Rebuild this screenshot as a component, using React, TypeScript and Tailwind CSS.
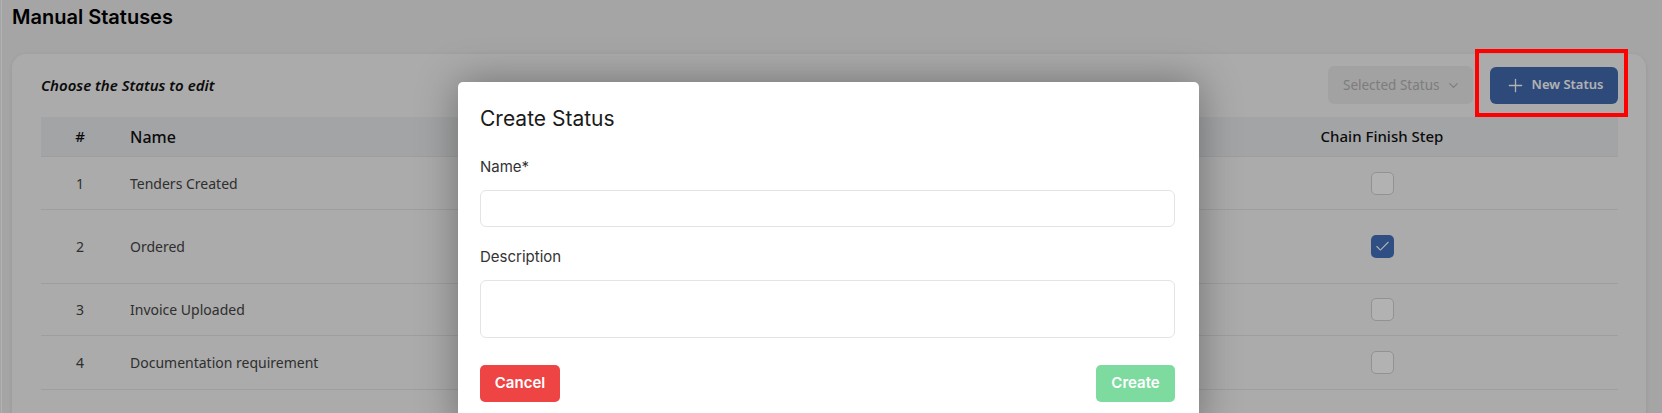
import React from "react";
import { Plus, ChevronDown, Check } from "lucide-react";

const statuses = [
    { id: 1, name: "Tenders Created", finish: false, h: "h-[53px]" },
    { id: 2, name: "Ordered", finish: true, h: "h-[74px]" },
    { id: 3, name: "Invoice Uploaded", finish: false, h: "h-[52px]" },
    { id: 4, name: "Documentation requirement", finish: false, h: "h-[54px]" },
];

const Checkbox = ({ checked }: { checked: boolean }) =>
    checked ? (
        <span className="w-[23px] h-[23px] rounded-[5px] bg-[#4370be] flex items-center justify-center">
            <Check size={17} strokeWidth={1.5} className="text-white" />
        </span>
    ) : (
        <span className="w-[23px] h-[23px] rounded-[5px] bg-white border border-[#cfd2d6]" />
    );

const StatusTable = () => {
    return (
        <div className="font-['Noto_Sans',sans-serif]">
            <div className="flex items-center h-[40px] bg-[#eaebed] border-b border-[#e2e3e5] text-[15px] font-medium text-[#111]">
                <div className="w-[78px] text-center">#</div>
                <div className="flex-1 pl-[11px] text-[16px]">Name</div>
                <div className="w-[472px] text-center">Chain Finish Step</div>
            </div>
            {statuses.map((s) => (
                <div
                    key={s.id}
                    className={`flex items-center ${s.h} border-b border-[#e2e3e5] text-[14px] text-[#444]`}
                >
                    <div className="w-[78px] text-center">{s.id}</div>
                    <div className="flex-1 pl-[11px]">{s.name}</div>
                    <div className="w-[472px] flex justify-center">
                        <Checkbox checked={s.finish} />
                    </div>
                </div>
            ))}
        </div>
    );
};

const CreateStatusModal = () => {
    return (
        <div className="absolute left-[458px] top-[82px] w-[741px] bg-white rounded-[5px] shadow-[0_0_40px_rgba(0,0,0,0.35)] pl-[22px] pr-[24px] pt-[23px] pb-[30px] font-['Inter',sans-serif]">
            <h2 className="text-[21px] leading-7 text-[#1a1a1a]">Create Status</h2>
            <label className="block mt-[22px] text-[15px] leading-6 text-[#333]">Name*</label>
            <input className="mt-[11px] w-full h-[37px] rounded-md border border-[#e3e4e8] outline-none" />
            <label className="block mt-[18px] text-[15px] leading-6 text-[#333]">Description</label>
            <textarea className="mt-[11px] w-full h-[58px] rounded-md border border-[#e3e4e8] outline-none resize-none block" />
            <div className="flex justify-between mt-[27px]">
                <button className="w-[80px] h-[37px] rounded-[5px] bg-[#ef4444] text-white text-[15px] font-semibold">
                    Cancel
                </button>
                <button className="w-[79px] h-[37px] rounded-[5px] bg-[#7ddb9f] text-white text-[15px] font-semibold">
                    Create
                </button>
            </div>
        </div>
    );
};

export default function App() {
    return (
        <div className="relative w-full h-[413px] overflow-hidden bg-[#ececed]">
            <div className="h-full border-l border-white ml-px pl-[10px] pr-[16px]">
                <h1 className="pt-[3px] text-[20px] leading-7 font-semibold text-black font-['Inter',sans-serif]">
                    Manual Statuses
                </h1>
                <div className="mt-[23px] bg-[#f5f5f5] rounded-[14px] shadow-[0_1px_4px_rgba(0,0,0,0.08)] pl-[29px] pr-[28px] pt-[12px] h-[420px]">
                    <div className="flex items-center justify-between h-[38px]">
                        <p className="italic font-semibold text-[15px] text-[#111] font-['Noto_Sans',sans-serif]">
                            Choose the Status to edit
                        </p>
                        <div className="flex items-center gap-[17px] font-['Noto_Sans',sans-serif]">
                            <div className="w-[145px] h-[38px] rounded-md bg-[#e9e9e9] flex items-center justify-between pl-[15px] pr-[12px] text-[13.5px] text-[#b3b3b3]">
                                <span>Selected Status</span>
                                <ChevronDown size={15} />
                            </div>
                            <button className="w-[128px] h-[37px] rounded-md bg-[#426ab1] flex items-center justify-center gap-[6px] text-white text-[13px] font-semibold">
                                <Plus size={21} strokeWidth={1.5} />
                                New Status
                            </button>
                        </div>
                    </div>
                    <div className="mt-[13px]">
                        <StatusTable />
                    </div>
                </div>
            </div>

            <div className="absolute inset-0 bg-black/30" />
            <CreateStatusModal />
            <div className="absolute left-[1475px] top-[49px] w-[153px] h-[68px] border-4 border-[#ff0000]" />
        </div>
    );
}
